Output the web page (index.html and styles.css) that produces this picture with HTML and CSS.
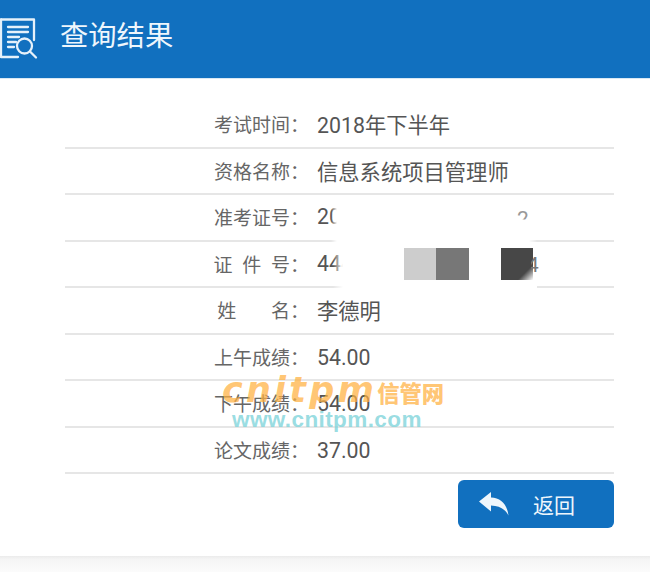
FILE: index.html
```html
<!DOCTYPE html>
<html lang="zh-CN">
<head>
<meta charset="utf-8">
<title>查询结果</title>
<link rel="stylesheet" href="styles.css">
</head>
<body>
<header class="topbar">
  <svg class="topbar-icon" width="37" height="42" viewBox="0 0 37 42" fill="none" stroke="#e6f1fa" stroke-width="2.300" stroke-linecap="round" stroke-linejoin="round">
    <path d="M1 1.500H34V22"/>
    <path d="M1 1.500V39H18"/>
    <path d="M8 9H28M8 14H28M8 19H19M8 24H16M8 29H14"/>
    <circle cx="24.500" cy="28" r="7.500"/>
    <path d="M30 33.500L36 39.500"/>
  </svg>
  <h1 class="topbar-title">查询结果</h1>
</header>
<main class="result">
  <div class="row"><span class="label">考试时间：</span><span class="value">2018年下半年</span></div>
  <div class="row"><span class="label">资格名称：</span><span class="value">信息系统项目管理师</span></div>
  <div class="row"><span class="label">准考证号：</span><span class="value">20</span></div>
  <div class="row"><span class="label label-id">证 件 号：</span><span class="value">444</span></div>
  <div class="row"><span class="label label-name">姓 名：</span><span class="value">李德明</span></div>
  <div class="row"><span class="label">上午成绩：</span><span class="value value-num">54.00</span></div>
  <div class="row"><span class="label">下午成绩：</span><span class="value value-num">54.00</span></div>
  <div class="row"><span class="label">论文成绩：</span><span class="value value-num">37.00</span></div>
  <div class="actions">
    <button class="back" type="button">
      <svg class="back-icon" width="30" height="24" viewBox="0 0 30 24"><path fill="#eef6fc" d="M0 9.500L12 0V5.500C22 6 28 12 29.500 23.500C26 17 21 14 12 13.500V19.500Z"/></svg>
      <span>返回</span>
    </button>
  </div>
  <div class="mask mask-upper"></div>
  <div class="mask mask-lower"></div>
  <div class="stray stray-digit">2</div>
  <div class="pixels">
    <i class="px px-light"></i><i class="px px-mid"></i><i class="px-gap"></i><i class="px px-dark"></i>
  </div>
  <div class="stray stray-four">4</div>
  <div class="mark">
    <div class="mark-top">cnitpm<span class="mark-cn">信管网</span></div>
    <div class="mark-bottom">www.cnitpm.com</div>
  </div>
</main>
<div class="footer-band"></div>
</body>
</html>
```
FILE: styles.css
```css
* { box-sizing: border-box; }
html, body { margin: 0; height: 100%; background: #fff; overflow: hidden; }
body {
  position: relative;
  font-family: Roboto, "Noto Sans CJK SC", sans-serif;
  color: #555;
}
.topbar {
  height: 78px;
  background: #1170bf;
  display: flex;
  align-items: center;
  gap: 23px;
  box-shadow: 0 1px 0 #d9e8f4;
}
.topbar-icon { flex: none; margin-top: -1px; overflow: visible; }
.topbar-title {
  margin: -3px 0 0;
  font-size: 28.300px;
  font-weight: 400;
  color: #eef6fc;
  line-height: 1;
}
.result {
  position: relative;
  margin: 24px 36px 0 65px;
}
.row {
  height: 46.500px;
  display: flex;
  align-items: center;
  gap: 8px;
  border-bottom: 2px solid #e6e6e6;
  padding-bottom: 1px;
}
.label {
  flex: 0 0 244px;
  text-align: right;
  font-size: 19px;
  color: #666;
  white-space: pre;
}
.label-id { word-spacing: 5px; }
.label-name { word-spacing: 30px; }
.value { font-size: 21.300px; color: #555; }
.value-num { padding-top: 2px; }
.actions { display: flex; justify-content: flex-end; padding-top: 6px; }
.back {
  width: 156px;
  height: 48px;
  border: 0;
  border-radius: 6px;
  background: #1170bf;
  color: #eef6fc;
  font: inherit;
  font-size: 21px;
  display: flex;
  align-items: center;
  padding: 0 0 0 21px;
  gap: 24px;
}
.back-icon { flex: none; }
.mask { position: absolute; }
.mask-upper {
  left: 266px;
  top: 100px;
  width: 206px;
  height: 48px;
  background: linear-gradient(90deg, rgba(255,255,255,0) 0, #fff 6px, #fff 198px, rgba(255,255,255,0) 100%);
}
.mask-lower {
  left: 268px;
  top: 146px;
  width: 204px;
  height: 40px;
  background: linear-gradient(90deg, rgba(255,255,255,0) 0, #fff 10px);
}
.stray { position: absolute; color: #999; font-size: 21px; line-height: 1; }
.stray-digit { left: 452px; top: 107px; clip-path: inset(0 0 50% 0); }
.stray-four { left: 462px; top: 153px; color: #777; clip-path: inset(0 0 0 4px); }
.pixels {
  position: absolute;
  left: 339px;
  top: 146px;
  display: flex;
}
.px, .px-gap { display: block; width: 32.300px; height: 32px; }
.px-light { background: #cdcdcd; }
.px-mid { background: #777; }
.px-dark { background: linear-gradient(135deg, #474747 76%, #fff 100%); }
.mark { position: absolute; left: 157px; top: 272px; width: 230px; pointer-events: none; }
.mark-top {
  font-family: "DejaVu Sans", sans-serif;
  font-weight: 700;
  font-style: italic;
  font-size: 35px;
  letter-spacing: 3.200px;
  line-height: 32px;
  color: rgba(255, 176, 64, 0.72);
  white-space: nowrap;
}
.mark-cn {
  font-family: "Noto Sans CJK SC", sans-serif;
  font-size: 22.300px;
  font-weight: 900;
  font-style: normal;
  letter-spacing: 0;
}
.mark-bottom {
  font-family: "Liberation Sans", sans-serif;
  font-weight: 700;
  font-size: 22.500px;
  line-height: 24px;
  margin-left: 10px;
  letter-spacing: 0.4px;
  color: rgba(128, 212, 218, 0.8);
  white-space: nowrap;
}
.footer-band {
  position: absolute;
  left: 0;
  right: 0;
  top: 556px;
  height: 16px;
  background: linear-gradient(#ebebeb 0, #f5f5f5 20%, #fbfbfb 100%);
}
```
